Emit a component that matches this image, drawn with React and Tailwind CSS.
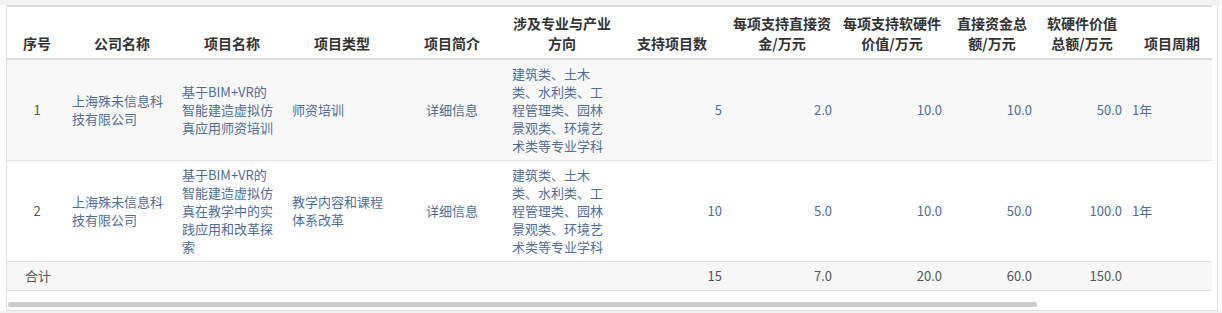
import React from "react";

const cols = [
  { key: "idx", title: "序号", w: "w-[60px]" },
  { key: "company", title: "公司名称", w: "w-[110px]" },
  { key: "name", title: "项目名称", w: "w-[110px]" },
  { key: "type", title: "项目类型", w: "w-[110px]" },
  { key: "intro", title: "项目简介", w: "w-[110px]" },
  { key: "major", title: "涉及专业与产业方向", w: "w-[110px]" },
  { key: "count", title: "支持项目数", w: "w-[110px]" },
  { key: "direct", title: "每项支持直接资金/万元", w: "w-[110px]" },
  { key: "hw", title: "每项支持软硬件价值/万元", w: "w-[110px]" },
  { key: "directTotal", title: "直接资金总额/万元", w: "w-[90px]" },
  { key: "hwTotal", title: "软硬件价值总额/万元", w: "w-[90px]" },
  { key: "period", title: "项目周期", w: "w-[90px]" },
  // columns scrolled out of view
  { key: "extra1", title: "", w: "w-[100px]" },
  { key: "extra2", title: "", w: "w-[100px]" },
];

const rows = [
  {
    idx: 1,
    company: "上海殊未信息科技有限公司",
    name: "基于BIM+VR的智能建造虚拟仿真应用师资培训",
    type: "师资培训",
    major: "建筑类、土木类、水利类、工程管理类、园林景观类、环境艺术类等专业学科",
    count: 5,
    direct: "2.0",
    hw: "10.0",
    directTotal: "10.0",
    hwTotal: "50.0",
    period: "1年",
    bg: "bg-[#f8f8f8]",
  },
  {
    idx: 2,
    company: "上海殊未信息科技有限公司",
    name: "基于BIM+VR的智能建造虚拟仿真在教学中的实践应用和改革探索",
    type: "教学内容和课程体系改革",
    major: "建筑类、土木类、水利类、工程管理类、园林景观类、环境艺术类等专业学科",
    count: 10,
    direct: "5.0",
    hw: "10.0",
    directTotal: "50.0",
    hwTotal: "100.0",
    period: "1年",
    bg: "bg-white",
  },
];

const td = "px-[5px] py-[5px] border-b border-[#e3e3e3] align-middle";
const link = "text-[#4f6e9d]";

function App() {
  return (
    <div className="w-[1222px] h-[313px] bg-white font-['Noto_Sans_CJK_SC',sans-serif] text-[13px] leading-[18px]">
      <div className="h-[5px] bg-[#f2f2f2]" />
      <div className="ml-[6px] w-[1212px] border-x border-b border-[#e0e0e0]">
        <div className="mr-[5px] overflow-hidden border-t-2 border-[#dddddd]">
          <table className="w-[1410px] table-fixed border-separate border-spacing-0">
            <colgroup>
              {cols.map((c) => (
                <col key={c.key} className={c.w} />
              ))}
            </colgroup>
            <thead>
              <tr>
                {cols.map((c) => (
                  <th
                    key={c.key}
                    className="px-[5px] pt-[6px] pb-[5px] h-[51px] align-bottom text-center text-[14px] leading-[20px] font-bold text-[#333] bg-white border-b-2 border-[#dddddd]"
                  >
                    {c.title}
                  </th>
                ))}
              </tr>
            </thead>
            <tbody>
              {rows.map((r) => (
                <tr key={r.idx} className={r.bg}>
                  <td className={`${td} text-center text-[#555]`}>{r.idx}</td>
                  <td className={`${td} ${link}`}>{r.company}</td>
                  <td className={`${td} pr-[9px] ${link}`}>{r.name}</td>
                  <td className={`${td} ${link}`}>{r.type}</td>
                  <td className={`${td} text-center ${link}`}>详细信息</td>
                  <td className={`${td} ${link}`}>{r.major}</td>
                  <td className={`${td} text-right ${link}`}>{r.count}</td>
                  <td className={`${td} text-right ${link}`}>{r.direct}</td>
                  <td className={`${td} text-right ${link}`}>{r.hw}</td>
                  <td className={`${td} text-right ${link}`}>{r.directTotal}</td>
                  <td className={`${td} text-right ${link}`}>{r.hwTotal}</td>
                  <td className={`${td} ${link}`}>{r.period}</td>
                  <td className={td} />
                  <td className={td} />
                </tr>
              ))}
              <tr className="bg-[#f7f7f7] text-[#555]">
                <td className={`${td} pl-[18px]`}>合计</td>
                <td className={td} />
                <td className={td} />
                <td className={td} />
                <td className={td} />
                <td className={td} />
                <td className={`${td} text-right`}>15</td>
                <td className={`${td} text-right`}>7.0</td>
                <td className={`${td} text-right`}>20.0</td>
                <td className={`${td} text-right`}>60.0</td>
                <td className={`${td} text-right`}>150.0</td>
                <td className={td} />
                <td className={td} />
                <td className={td} />
              </tr>
            </tbody>
          </table>
          {/* horizontal scroll bar */}
          <div className="pt-[11px] pb-[3px] px-[1px]">
            <div className="w-[1029px] h-[5px] rounded-full bg-[#cccccc]" />
          </div>
        </div>
      </div>
      <div className="h-[4px] bg-[#f2f2f2]" />
    </div>
  );
}

export default App;
